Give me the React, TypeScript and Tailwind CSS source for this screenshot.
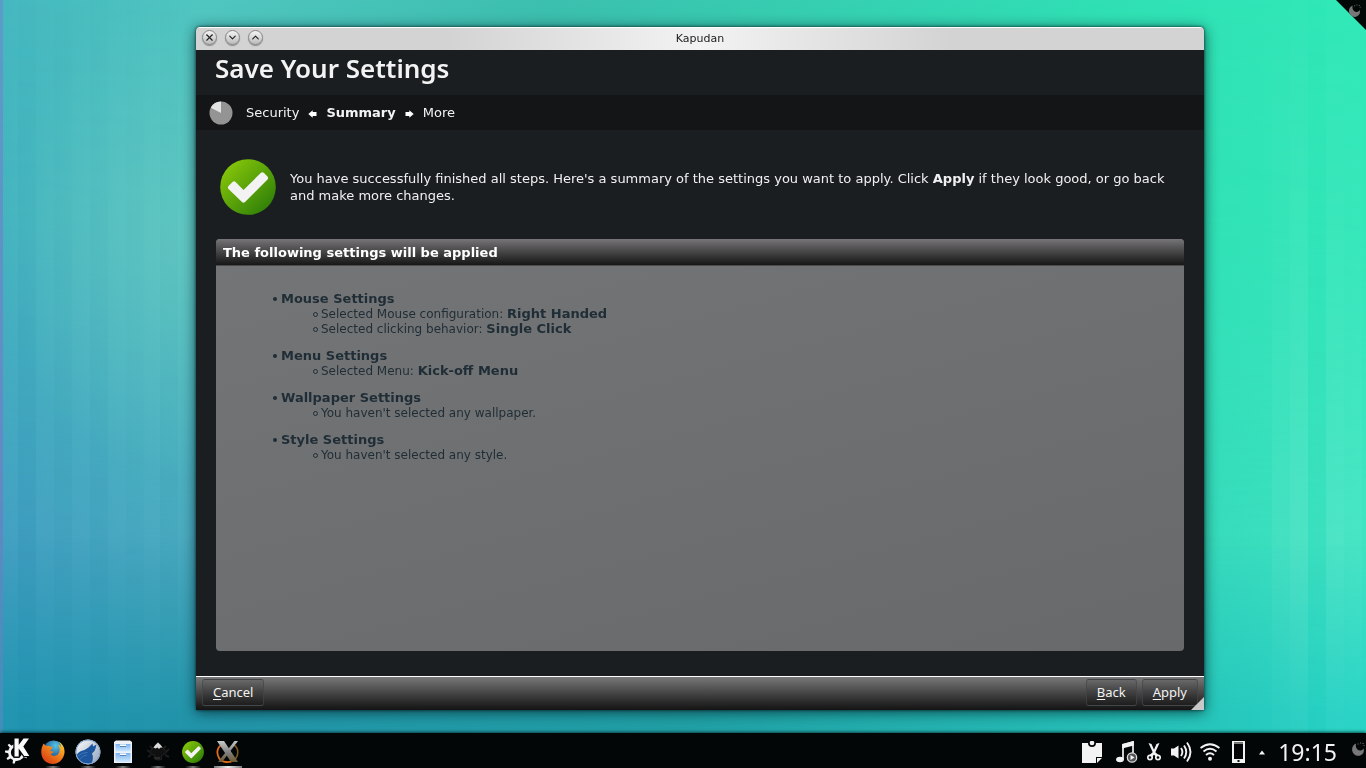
import { X, ChevronDown, ChevronUp } from 'lucide-react'
import type { ReactNode } from 'react'

const STRIPES = [
  [18, 0.09, '#006d9d'], [54, 0.05, '#007b92'], [90, 0.06, '#007b92'], [126, 0.03, '#007b92'], [160, 0.05, '#007b92'],
  [1272, 0.05, '#ffffff'], [1290, 0.09, '#ffffff'], [1308, 0.03, '#00c8a0'], [1326, 0.08, '#ffffff'], [1344, 0.05, '#ffffff'],
] as const

function Wallpaper() {
  return (
    <svg className="absolute inset-0 h-full w-full" viewBox="0 0 1366 768" preserveAspectRatio="none" aria-hidden="true">
      <defs>
        <linearGradient id="wp-top"><stop offset="0" stopColor="#45b8bf" /><stop offset="0.15" stopColor="#50c6c0" /><stop offset="0.4" stopColor="#3cbfae" /><stop offset="0.8" stopColor="#30dfb4" /><stop offset="1" stopColor="#30e9b8" /></linearGradient>
        <linearGradient id="wp-mid"><stop offset="0" stopColor="#439fc2" /><stop offset="0.13" stopColor="#4baac0" /><stop offset="0.5" stopColor="#35bdb4" /><stop offset="0.88" stopColor="#36dabb" /><stop offset="1" stopColor="#40e4c2" /></linearGradient>
        <linearGradient id="wp-low"><stop offset="0" stopColor="#2195b1" /><stop offset="0.15" stopColor="#2294a9" /><stop offset="0.5" stopColor="#20a0a5" /><stop offset="0.88" stopColor="#27c5bb" /><stop offset="1" stopColor="#27d4c6" /></linearGradient>
        <linearGradient id="wp-fade1" x1="0" y1="0" x2="0" y2="1"><stop offset="0" stopColor="#000" /><stop offset="0.28" stopColor="#222" /><stop offset="0.72" stopColor="#fff" /></linearGradient>
        <linearGradient id="wp-fade2" x1="0" y1="0" x2="0" y2="1"><stop offset="0.7" stopColor="#000" /><stop offset="0.93" stopColor="#fff" /></linearGradient>
        <linearGradient id="wp-stripe" x1="0" y1="0" x2="0" y2="1"><stop offset="0" stopColor="#fff" stopOpacity="0.1" /><stop offset="0.7" stopColor="#fff" /><stop offset="1" stopColor="#fff" stopOpacity="0.2" /></linearGradient>
        <radialGradient id="wp-glow"><stop offset="0" stopColor="#7cd0c4" stopOpacity="0.4" /><stop offset="1" stopColor="#7cd0c4" stopOpacity="0" /></radialGradient>
        <linearGradient id="wp-edge" x1="0" y1="0" x2="0" y2="1"><stop offset="0" stopColor="#5c9cc8" /><stop offset="0.62" stopColor="#6488c4" /><stop offset="1" stopColor="#3a90b8" /></linearGradient>
        <mask id="wp-m1"><rect width="1366" height="768" fill="url(#wp-fade1)" /></mask>
        <mask id="wp-m2"><rect width="1366" height="768" fill="url(#wp-fade2)" /></mask>
        <mask id="wp-m3"><rect width="1366" height="768" fill="url(#wp-stripe)" /></mask>
      </defs>
      <rect width="1366" height="768" fill="url(#wp-top)" />
      <rect width="1366" height="768" fill="url(#wp-mid)" mask="url(#wp-m1)" />
      <rect width="1366" height="768" fill="url(#wp-low)" mask="url(#wp-m2)" />
      <ellipse cx="175" cy="240" rx="170" ry="240" fill="url(#wp-glow)" />
      <g mask="url(#wp-m3)">
        {STRIPES.map(([x, o, c]) => <rect key={x} x={x} width="18" height="768" fill={c} opacity={o} />)}
      </g>
      <rect width="3" height="768" fill="url(#wp-edge)" />
    </svg>
  )
}

function TitleButton({ label, children }: { label: string; children: ReactNode }) {
  return (
    <button aria-label={label} className="flex size-[15px] items-center justify-center rounded-full border border-[#858585] bg-linear-to-b from-[#f4f4f4] to-[#bcbcbc] text-[#222] shadow-[0_1px_1px_rgba(0,0,0,0.35)]">
      {children}
    </button>
  )
}

function CheckBadge({ id, className }: { id: string; className: string }) {
  return (
    <svg viewBox="0 0 56 56" className={className} aria-hidden="true">
      <defs><linearGradient id={id} x1="0" y1="0" x2="1" y2="1"><stop offset="0.1" stopColor="#86c60a" /><stop offset="0.9" stopColor="#2f7f08" /></linearGradient></defs>
      <circle cx="28" cy="28" r="27.8" fill={`url(#${id})`} />
      <path d="M8.5 27L12.8 22.800Q14.300 21.700 15.800 23.200L23.500 31L41 13.700Q42.500 12.500 44 14L47.500 17.500Q48.700 19 47.500 20.500L25 43Q23.500 44.500 22 43L8.500 30Q7.300 28.500 8.500 27Z" fill="#f3f3f3" />
    </svg>
  )
}

function Arrow({ flip = false }: { flip?: boolean }) {
  return (
    <svg viewBox="0 0 9 8" className={flip ? 'h-2 w-[9px] rotate-180' : 'h-2 w-[9px]'} aria-hidden="true">
      <path d="M0.500 2H4.300V0.300L8.700 4L4.300 7.700V6H0.500Z" fill="#fff" />
    </svg>
  )
}

function FooterButton({ hotkey, rest }: { hotkey: string; rest: string }) {
  return (
    <button className="h-[27px] rounded-[3px] border border-[#45484d]/70 bg-linear-to-b from-[#656565]/60 via-[#3b3b3b]/60 to-[#1b1b1b]/60 px-[10px] pb-px font-['Noto_Sans'] text-[13px] leading-none text-[#f2f2f2]">
      <span className="underline underline-offset-2">{hotkey}</span>{rest}
    </button>
  )
}

const SETTINGS: { title: string; items: [string, string?][] }[] = [
  { title: 'Mouse Settings', items: [['Selected Mouse configuration: ', 'Right Handed'], ['Selected clicking behavior: ', 'Single Click']] },
  { title: 'Menu Settings', items: [['Selected Menu: ', 'Kick-off Menu']] },
  { title: 'Wallpaper Settings', items: [["You haven't selected any wallpaper."]] },
  { title: 'Style Settings', items: [["You haven't selected any style."]] },
]

function Swirl({ className }: { className: string }) {
  return (
    <svg viewBox="0 0 14 16" className={className} aria-hidden="true">
      <path d="M5 1.500C1 3 0 8 2.500 11.500C5 15 10.500 14.500 12.500 10.500C13 9 13 7.500 12.500 6.500C11.500 8.500 8.500 9.500 6.500 7.500C4.800 5.800 4.500 3.500 5 1.500Z" fill="#777" />
      <path d="M6.500 2h1.200M9 1h1.200M11.500 1.500h1.200M12.500 3.500h1" stroke="#666" strokeWidth="1" />
    </svg>
  )
}

const GEAR_TEETH = [15, 55, 95, 135, 175, 295]

function KdeIcon() {
  return (
    <svg viewBox="0 0 26 28" className="h-7 w-[26px]" aria-hidden="true">
      <circle cx="12.500" cy="15.500" r="7" fill="none" stroke="#f4f4f4" strokeWidth="2.800" />
      {GEAR_TEETH.map((angle) => <path key={angle} d="M11 22.500H14L13.500 27H11.500Z" fill="#f4f4f4" transform={`rotate(${angle} 12.500 15.500)`} />)}
      <path d="M10.500 1.500H14.700V8L19.500 1.500H25L19.300 9.500L25.300 19H20.200L14.700 11.500V19.500H10.500Z" fill="#fafafa" stroke="#020606" strokeWidth="2.400" paintOrder="stroke" />
    </svg>
  )
}

function FirefoxIcon() {
  return (
    <svg viewBox="0 0 24 24" className="size-6" aria-hidden="true">
      <defs>
        <radialGradient id="ff-b" cx="0.6" cy="0.25" r="0.7"><stop offset="0" stopColor="#55c5e8" /><stop offset="1" stopColor="#133b7b" /></radialGradient>
        <linearGradient id="ff-o" x1="1" y1="0" x2="0.2" y2="1"><stop offset="0" stopColor="#ffdc35" /><stop offset="0.5" stopColor="#f0801c" /><stop offset="1" stopColor="#d83a11" /></linearGradient>
      </defs>
      <circle cx="12.500" cy="11" r="10.500" fill="url(#ff-b)" />
      <path d="M1 7L2.500 3.500L5 6C7 5.300 8.500 6 9 6.500L11.500 7C11.500 9 9.500 9.500 9 11L12.500 11.500C12 13.500 10 13.500 9.500 14C12 17.500 18 16 18.500 11C19 8 18 6 16.500 4.500C19 5 20 7 20 7C20 4.500 19 3 17.500 1.500C22 4 24 8.500 23.500 13C22.500 19.500 17.500 24 12 24C5 24 0 18.500 0.300 12C0.300 10 0.500 8.500 1 7Z" fill="url(#ff-o)" />
    </svg>
  )
}

function BrowserIcon() {
  return (
    <svg viewBox="0 0 26 26" className="size-[26px]" aria-hidden="true">
      <defs><linearGradient id="br" x1="0" y1="0" x2="1" y2="1"><stop offset="0" stopColor="#fff" /><stop offset="1" stopColor="#8f9fb5" /></linearGradient></defs>
      <circle cx="13" cy="13" r="12.500" fill="url(#br)" />
      <path d="M1.500 16Q4 12 9.500 11L13.500 8.500L17.500 4.500L18 7.500L21.500 5.500L20.500 9.500L19.500 12L17 14.500Q19 19 16.500 24.500Q8 26 3.500 20.500Z" fill="#1d559f" />
      <path d="M2.500 17.500Q7 13 12.500 13.500M5 20Q8 16 12 16" fill="none" stroke="#3a75b8" strokeWidth="1" />
      <circle cx="13" cy="13" r="12" fill="none" stroke="#7ba3d2" />
    </svg>
  )
}

function CabinetIcon() {
  return (
    <svg viewBox="0 0 20 24" className="h-6 w-5" aria-hidden="true">
      <defs><linearGradient id="cab" x1="0" y1="0" x2="0" y2="1"><stop offset="0" stopColor="#79b2f0" /><stop offset="1" stopColor="#cfe9ff" /></linearGradient></defs>
      <path d="M1 2L3 0.500H17L19 2V23H1Z" fill="#eef2f6" />
      <rect x="2.500" y="4" width="15" height="7.500" fill="url(#cab)" /><rect x="2.500" y="13" width="15" height="9" fill="url(#cab)" />
      <path d="M7 4.500H13V6H7ZM7 13.500H13V15H7Z" fill="#fff" />
      <path d="M7 6.500H13M7 15.500H13" stroke="#5f84ad" />
    </svg>
  )
}

function InkscapeIcon() {
  return (
    <svg viewBox="0 0 24 24" className="size-6" aria-hidden="true">
      <path d="M1 10L4 12M2 17L5 15M23 9L20 12M23 17L19 15M4 6L7 9M20 6L17 9" stroke="#1c1c1c" strokeWidth="2" />
      <path d="M12 2.500L20 11.500C20.500 13 19 14 17 14.500L15 17Q18 19 13 20Q8 20 8 18L9 15.500L5 14Q3 13 4 11.500Z" fill="#101010" stroke="#242424" />
      <path d="M12 2.500Q14 4 16.500 7.500L14.500 7.500L13 9L11.500 7.500L9.500 8.500L7.500 7.500Q10 4 12 2.500Z" fill="#dcdcdc" />
      <path d="M9 18H14" stroke="#444" />
    </svg>
  )
}

function XIcon() {
  return (
    <svg viewBox="0 0 24 24" className="size-6" aria-hidden="true">
      <defs><linearGradient id="xg" x1="0" y1="0" x2="0" y2="1"><stop offset="0" stopColor="#c8caca" /><stop offset="0.55" stopColor="#808080" /><stop offset="1" stopColor="#6d5a30" /></linearGradient></defs>
      <path d="M8 3.500C1 6 0 13 3 18C6 23 14 23 18 20" fill="none" stroke="#e46b16" strokeWidth="1.800" />
      <path d="M18 5C23 8 23 16 18 20" fill="none" stroke="#80591c" strokeWidth="1.500" />
      <path d="M18.500 1H22L6 22H2Z" fill="url(#xg)" />
      <path d="M1 1H8L22 22H15Z" fill="url(#xg)" />
    </svg>
  )
}

const TASKS: [string, ReactNode][] = [
  ['Firefox', <FirefoxIcon />],
  ['Web browser', <BrowserIcon />],
  ['Files', <CabinetIcon />],
  ['Inkscape', <InkscapeIcon />],
  ['Kapudan', <CheckBadge id="task-check" className="size-[22px]" />],
]

function Taskbar() {
  return (
    <footer className="relative flex h-[35px] items-center bg-[#020606] shadow-[0_-1px_3px_rgba(0,20,25,0.7)]">
      <button aria-label="Application launcher" className="ml-1 w-[26px]"><KdeIcon /></button>
      <nav aria-label="Tasks" className="ml-[5px] flex h-full">
        {TASKS.map(([name, icon]) => (
          <button key={name} aria-label={name} className="flex h-full w-[35px] flex-col items-center">
            <span className="flex flex-1 items-center pt-1">{icon}</span>
            <span className="h-[2px] w-4 bg-linear-to-r from-transparent via-[#777] to-transparent" />
          </button>
        ))}
        <button aria-label="X application" className="flex h-full w-[35px] flex-col items-center">
          <span className="flex flex-1 items-center pt-1"><XIcon /></span>
          <span className="h-[2px] w-7 bg-linear-to-r from-[#777] via-[#eee] to-[#777]" />
        </button>
      </nav>
      <div className="ml-auto flex h-full items-center pt-[3px] text-[#f3f3f3]">
        <button aria-label="Clipboard" className="mr-[14px]">
          <svg viewBox="0 0 20 22" className="h-[22px] w-5"><path d="M0 2H6Q6 6 10 6Q14 6 14 2H20V16H14V22H0Z" fill="currentColor" /><circle cx="10" cy="2" r="2.300" fill="currentColor" /><path d="M15 17H20L15 22Z" fill="currentColor" /></svg>
        </button>
        <button aria-label="Media player" className="mr-[9px]">
          <svg viewBox="0 0 22 22" className="size-[22px]"><path d="M7 18V4L17 1V12" fill="none" stroke="currentColor" strokeWidth="1.700" /><path d="M6.200 3L17.800 0V4.500L6.200 7.500Z" fill="currentColor" /><ellipse cx="4" cy="18.500" rx="3.900" ry="2.700" fill="currentColor" /><circle cx="16" cy="16.500" r="4.700" fill="#555" stroke="#ddd" strokeWidth="1.200" /><path d="M14.500 14L18.500 16.500L14.500 19Z" fill="currentColor" /></svg>
        </button>
        <button aria-label="Scissors" className="mr-[10px]">
          <svg viewBox="0 0 14 18" className="h-[18px] w-[14px]"><path d="M1.500 0L4.500 1L8 9L11.500 12L9 14L6.500 11Z" fill="currentColor" /><path d="M12.500 0L9.500 1L6 9L2.500 12L5 14L7.500 11Z" fill="currentColor" /><circle cx="3" cy="14.500" r="2.200" fill="none" stroke="currentColor" strokeWidth="1.700" /><circle cx="11" cy="14.500" r="2.200" fill="none" stroke="currentColor" strokeWidth="1.700" /></svg>
        </button>
        <button aria-label="Volume" className="mr-2">
          <svg viewBox="0 0 21 22" className="h-[22px] w-[21px]"><path d="M0 7.500H3L7.500 4.500V17.500L3 14.500H0Z" fill="currentColor" /><path d="M10 7Q12.800 11 10 15M13 4.500Q17.500 11 13 17.500M16 1.500Q23 11 16 20.500" fill="none" stroke="currentColor" strokeWidth="1.900" /></svg>
        </button>
        <button aria-label="Wireless network" className="mr-3">
          <svg viewBox="0 0 20 18" className="h-[18px] w-5"><g fill="none" stroke="currentColor" strokeWidth="1.900"><path d="M0.500 5Q10 -2.500 19.500 5" /><path d="M3.500 8.500Q10 3 16.500 8.500" /><path d="M6 12Q10 8.500 14 12" /></g><circle cx="10" cy="15.800" r="2" fill="currentColor" /></svg>
        </button>
        <button aria-label="Device notifier" className="mr-[14px]">
          <svg viewBox="0 0 13 22" className="h-[22px] w-[13px]"><path d="M0 0H13V22H0Z M2 2.500V18H11V2.500Z" fill="currentColor" fillRule="evenodd" /><path d="M2 1.500H11" stroke="#777" /><rect x="5.500" y="19" width="2" height="2" fill="#111" /></svg>
        </button>
        <button aria-label="Show hidden icons" className="mr-[13px]">
          <svg viewBox="0 0 6 5" className="h-[5px] w-[6px]"><path d="M3 0.500L6 4.500H0Z" fill="currentColor" /></svg>
        </button>
        <time className="mr-[13px] pb-px font-['Noto_Sans'] text-[23px] leading-[30px]">19:15</time>
        <Swirl className="mb-1 h-4 w-4" />
      </div>
    </footer>
  )
}

export default function App() {
  return (
    <div className="relative flex min-h-screen flex-col overflow-hidden font-['DejaVu_Sans',sans-serif]">
      <Wallpaper />
      <button aria-label="Desktop toolbox" className="absolute top-0 right-0 h-[30px] w-[30px]">
        <svg viewBox="0 0 30 30" className="size-[30px]"><path d="M0 0H30V30Z" fill="#020806" /></svg>
        <Swirl className="absolute top-1 right-1 size-[15px]" />
      </button>
      <main className="relative flex flex-1 pt-[27px] pr-[162px] pb-[23px] pl-[196px]">
        <section aria-label="Kapudan" className="flex flex-1 flex-col overflow-hidden rounded-t-[4px] bg-[#1a1e21] shadow-[0_2px_14px_rgba(0,30,35,0.75),0_0_3px_rgba(0,25,30,0.9)]">
          <header className="grid h-[23px] grid-cols-[1fr_auto_1fr] items-center border-t border-white bg-linear-to-r from-[#d3d3d3] from-25% via-[#f3f3f3] to-[#d3d3d3] to-75% px-[6px]">
            <div className="flex gap-2 pb-[3px]">
              <TitleButton label="Close"><X size={11} strokeWidth={2.500} /></TitleButton>
              <TitleButton label="Minimize"><ChevronDown size={11} strokeWidth={2.500} /></TitleButton>
              <TitleButton label="Maximize"><ChevronUp size={11} strokeWidth={2.500} /></TitleButton>
            </div>
            <span className="text-[11px] text-[#1c1c1c]">Kapudan</span>
          </header>
          <h1 className="flex h-[45px] items-center px-[19px] pb-[9px] font-['Noto_Sans'] text-[26px] font-semibold text-[#f3f3f3]">Save Your Settings</h1>
          <nav aria-label="Steps" className="flex h-[35px] items-center bg-[#141517] px-[13px] text-[13px] text-[#f3f3f3]">
            <svg viewBox="0 0 24 24" className="mr-[13px] size-6" aria-hidden="true"><circle cx="12" cy="12" r="11.500" fill="#949494" /><path d="M12 12V0.500A11.500 11.500 0 0 0 1.800 6.700Z" fill="#e3e3e3" /></svg>
            <span className="pt-px">Security</span>
            <span className="mx-[9px] pt-[3px]"><Arrow flip /></span>
            <b className="pt-px">Summary</b>
            <span className="mx-[9px] pt-[3px]"><Arrow /></span>
            <span className="pt-px">More</span>
          </nav>
          <div className="flex flex-1 flex-col px-5 pt-[29px] pb-[25px]">
            <div className="flex items-center gap-[14px] pl-1">
              <CheckBadge id="main-check" className="size-14 shrink-0" />
              <p className="text-[13px] leading-[17px] text-[#f0f0f0]">You have successfully finished all steps. Here's a summary of the settings you want to apply. Click <b>Apply</b> if they look good, or go back and make more changes.</p>
            </div>
            <section className="mt-6 flex flex-1 flex-col overflow-hidden rounded-[4px] bg-linear-165 from-[#747577] to-[#68696b]">
              <h2 className="h-[27px] border-b border-[#4b4b4b] bg-linear-to-b from-[#777577] via-[#454545] to-[#171717] px-[7px] text-[13px] leading-[27px] font-bold text-white">The following settings will be applied</h2>
              <ul className="flex flex-col gap-3 pt-[25px] pl-[56px] text-[13px] leading-[15px] text-[#1f2d36]">
                {SETTINGS.map((group) => (
                  <li key={group.title}>
                    <div className="flex items-center gap-1"><span className="ml-px size-1 rounded-full bg-current" /><b>{group.title}</b></div>
                    <ul className="pl-10 text-[12px]">
                      {group.items.map(([text, value]) => (
                        <li key={text} className="flex h-[15px] items-center gap-[3px] pt-[2px]"><span className="ml-px size-[5px] rounded-full border border-current" /><span className="leading-[15px]">{text}{value && <b className="text-[13px] leading-none">{value}</b>}</span></li>
                      ))}
                    </ul>
                  </li>
                ))}
              </ul>
            </section>
          </div>
          <footer className="relative flex h-[34px] items-start gap-[5px] border-t border-white bg-linear-to-b from-[#787878] via-[#444] to-[#141414] px-[6px] pt-[2px]">
            <FooterButton hotkey="C" rest="ancel" />
            <span className="flex-1" />
            <FooterButton hotkey="B" rest="ack" />
            <FooterButton hotkey="A" rest="pply" />
            <svg viewBox="0 0 13 13" className="absolute right-0 bottom-0 size-[13px]" aria-hidden="true"><path d="M13 0V13H0Z" fill="#c8c8c8" /></svg>
          </footer>
        </section>
      </main>
      <Taskbar />
    </div>
  )
}
